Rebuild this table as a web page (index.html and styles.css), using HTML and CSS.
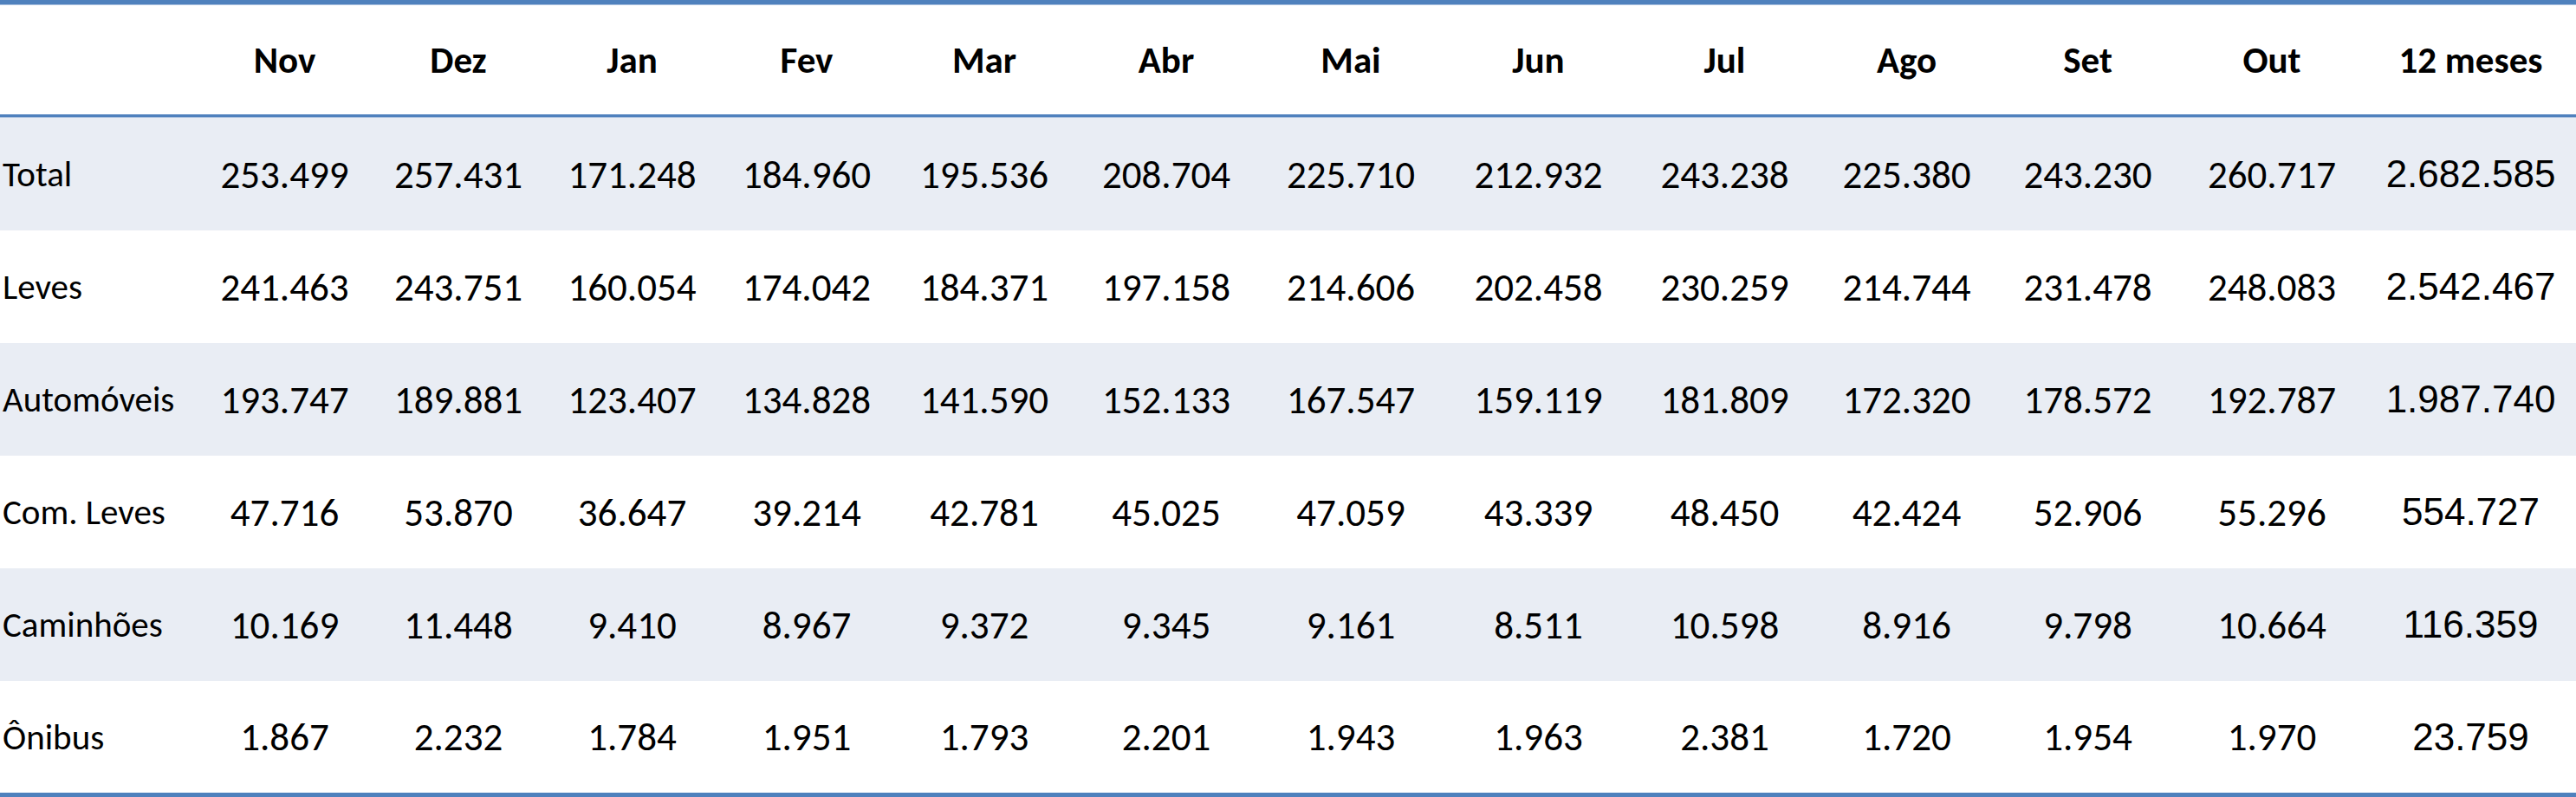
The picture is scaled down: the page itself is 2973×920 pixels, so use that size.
FILE: index.html
```html
<!DOCTYPE html>
<html lang="pt-BR">
<head>
<meta charset="utf-8">
<title>Licenciamento 12 meses</title>
<link rel="stylesheet" href="styles.css">
</head>
<body>
<div class="table">
  <div class="rule rule-top"></div>
  <div class="row head">
    <div class="cell label"></div>
    <div class="cell">Nov</div><div class="cell">Dez</div><div class="cell">Jan</div><div class="cell">Fev</div>
    <div class="cell">Mar</div><div class="cell">Abr</div><div class="cell">Mai</div><div class="cell">Jun</div>
    <div class="cell">Jul</div><div class="cell">Ago</div><div class="cell">Set</div><div class="cell">Out</div>
    <div class="cell">12 meses</div>
  </div>
  <div class="rule rule-mid"></div>
  <div class="row band">
    <div class="cell label">Total</div>
    <div class="cell">253.499</div><div class="cell">257.431</div><div class="cell">171.248</div><div class="cell">184.960</div>
    <div class="cell">195.536</div><div class="cell">208.704</div><div class="cell">225.710</div><div class="cell">212.932</div>
    <div class="cell">243.238</div><div class="cell">225.380</div><div class="cell">243.230</div><div class="cell">260.717</div>
    <div class="cell sum">2.682.585</div>
  </div>
  <div class="row">
    <div class="cell label">Leves</div>
    <div class="cell">241.463</div><div class="cell">243.751</div><div class="cell">160.054</div><div class="cell">174.042</div>
    <div class="cell">184.371</div><div class="cell">197.158</div><div class="cell">214.606</div><div class="cell">202.458</div>
    <div class="cell">230.259</div><div class="cell">214.744</div><div class="cell">231.478</div><div class="cell">248.083</div>
    <div class="cell sum">2.542.467</div>
  </div>
  <div class="row band">
    <div class="cell label">Automóveis</div>
    <div class="cell">193.747</div><div class="cell">189.881</div><div class="cell">123.407</div><div class="cell">134.828</div>
    <div class="cell">141.590</div><div class="cell">152.133</div><div class="cell">167.547</div><div class="cell">159.119</div>
    <div class="cell">181.809</div><div class="cell">172.320</div><div class="cell">178.572</div><div class="cell">192.787</div>
    <div class="cell sum">1.987.740</div>
  </div>
  <div class="row">
    <div class="cell label">Com. Leves</div>
    <div class="cell">47.716</div><div class="cell">53.870</div><div class="cell">36.647</div><div class="cell">39.214</div>
    <div class="cell">42.781</div><div class="cell">45.025</div><div class="cell">47.059</div><div class="cell">43.339</div>
    <div class="cell">48.450</div><div class="cell">42.424</div><div class="cell">52.906</div><div class="cell">55.296</div>
    <div class="cell sum">554.727</div>
  </div>
  <div class="row band">
    <div class="cell label">Caminhões</div>
    <div class="cell">10.169</div><div class="cell">11.448</div><div class="cell">9.410</div><div class="cell">8.967</div>
    <div class="cell">9.372</div><div class="cell">9.345</div><div class="cell">9.161</div><div class="cell">8.511</div>
    <div class="cell">10.598</div><div class="cell">8.916</div><div class="cell">9.798</div><div class="cell">10.664</div>
    <div class="cell sum">116.359</div>
  </div>
  <div class="row last">
    <div class="cell label">Ônibus</div>
    <div class="cell">1.867</div><div class="cell">2.232</div><div class="cell">1.784</div><div class="cell">1.951</div>
    <div class="cell">1.793</div><div class="cell">2.201</div><div class="cell">1.943</div><div class="cell">1.963</div>
    <div class="cell">2.381</div><div class="cell">1.720</div><div class="cell">1.954</div><div class="cell">1.970</div>
    <div class="cell sum">23.759</div>
  </div>
  <div class="rule rule-bottom"></div>
</div>
</body>
</html>
```
FILE: styles.css
```css
html, body {
  margin: 0;
  padding: 0;
  background: #ffffff;
}

.table {
  width: 2973px;
  display: flex;
  flex-direction: column;
  font-family: Carlito, "Open Sans", "Liberation Sans", sans-serif;
  color: #000000;
}

.rule {
  background: #4f81bd;
}

.rule-top {
  height: 5px;
  border-bottom: 1px solid #a9c0de;
}

.rule-mid {
  height: 3px;
  border-bottom: 1px solid #a9c0de;
}

.rule-bottom {
  height: 5px;
}

.row {
  display: grid;
  grid-template-columns: 228px 201px 200px 201px 202px 208px 212px 214px 219px 211px 209px 209px 216px 243px;
  height: 130px;
  align-items: center;
  font-size: 45px;
}

.row.last {
  height: 129px;
}

.row.head {
  height: 126px;
  font-weight: bold;
  font-size: 43px;
}

.band {
  background: #e9edf4;
}

.cell {
  text-align: center;
  white-space: nowrap;
}

.cell.label {
  text-align: left;
  padding-left: 3px;
  font-size: 41px;
}

.cell.sum {
  font-family: "Liberation Sans", Arial, sans-serif;
  font-size: 44px;
}
```
